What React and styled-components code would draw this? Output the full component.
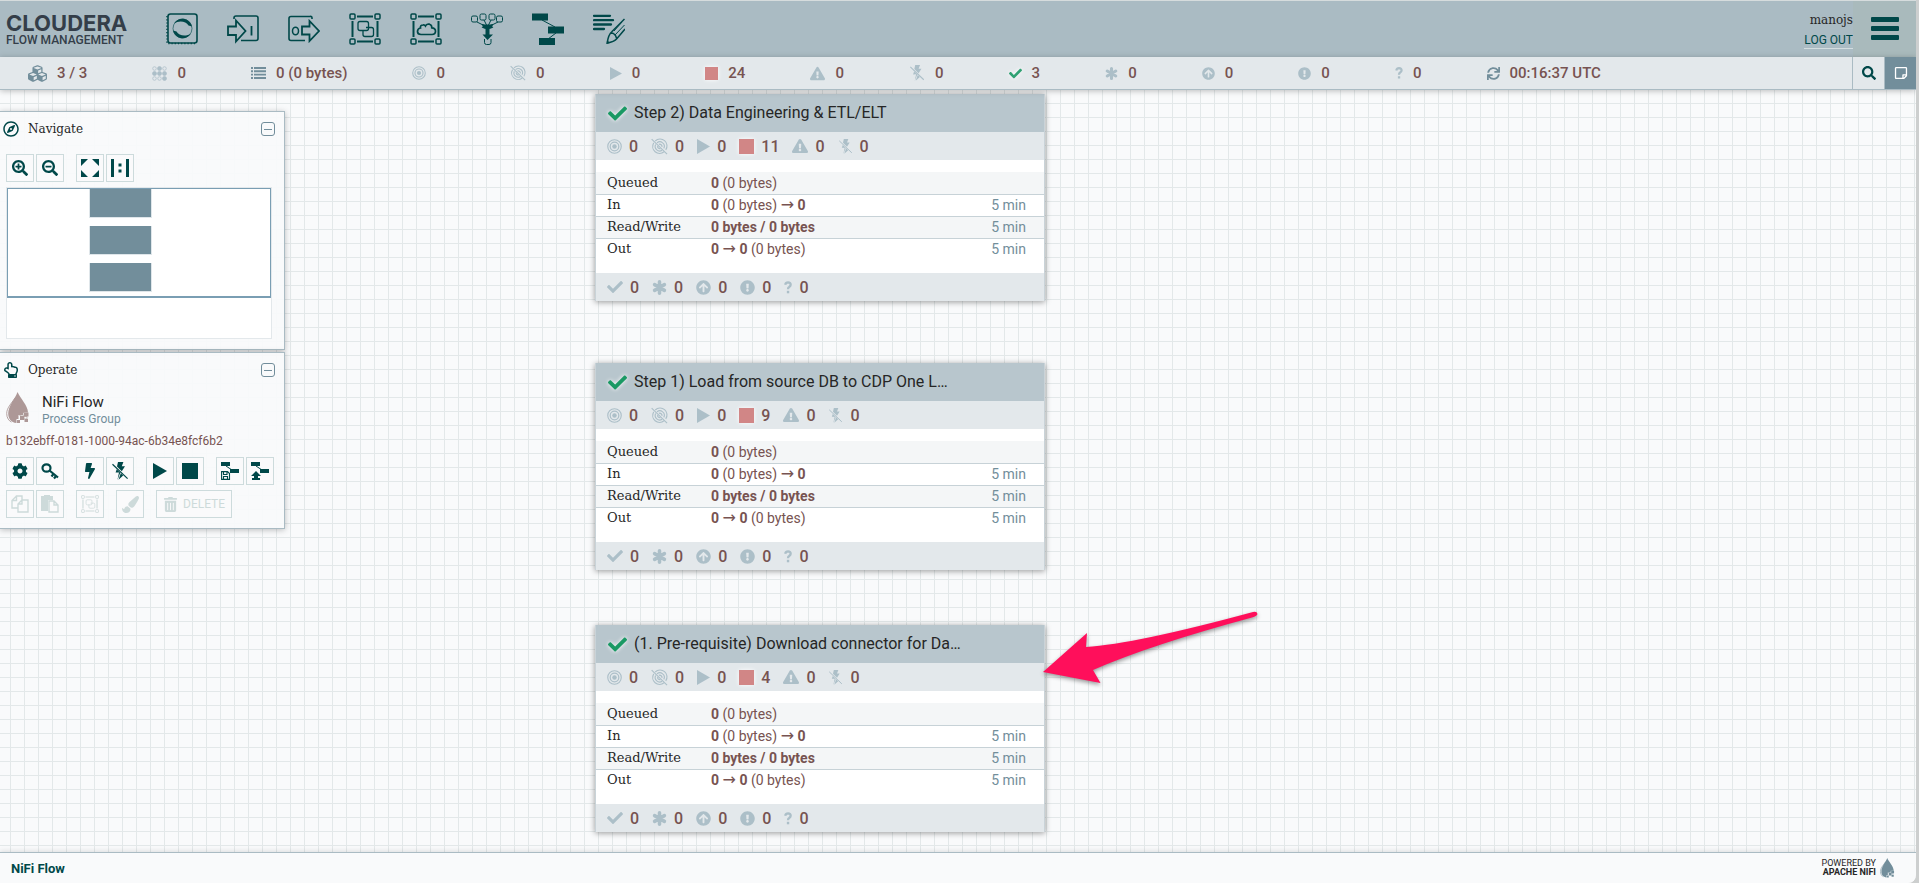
import React from "react";
import styled, { createGlobalStyle, css } from "styled-components";
import {
  FaCubes, FaCheck, FaArrowCircleUp, FaExclamationCircle, FaSync,
  FaSearch, FaRegStickyNote, FaRegCompass, FaRegHandPointUp, FaSearchPlus, FaSearchMinus,
  FaCog, FaBolt, FaPaintBrush, FaTrashAlt, FaExclamationTriangle,
} from "react-icons/fa";

const c = {
  dark: "#004849",
  header: "#aabbc3",
  bar: "#e3e8eb",
  steel: "#728e9b",
  pale: "#acbfc8",
  brown: "#775351",
  ink: "#262626",
  disabled: "#cddada",
};
const sans = `Roboto, "Liberation Sans", sans-serif`;
const slab = `"DejaVu Serif", "Liberation Serif", serif`;

const GlobalStyle = createGlobalStyle`
  *, *::before, *::after { box-sizing: border-box; }
  body { margin: 0; font-family: ${sans}; color: ${c.ink}; background: #cdcfcf; }
  button { font: inherit; margin: 0; padding: 0; cursor: pointer; }
  svg { display: block; flex: none; }
`;

const Page = styled.div`
  display: flex;
  flex-direction: column;
  height: 100vh;
  min-height: 640px;
  margin-right: 3px;
  background: #f9fafb;
  border-top: 1px solid #d6dcdd;
  border-bottom-right-radius: 8px;
  overflow: hidden;
`;

/* ---------- header ---------- */
const Header = styled.header`
  display: flex;
  flex: none;
  height: 56px;
  background: ${c.header};
`;
const Brand = styled.div`
  display: flex;
  flex-direction: column;
  width: 166px;
  padding: 11px 0 0 6px;
  color: #343e49;
  white-space: nowrap;
`;
const BrandName = styled.span`
  font-family: Inter, ${sans};
  font-size: 22px;
  line-height: 22px;
  font-weight: 700;
`;
const BrandProduct = styled.span`
  font-size: 12px;
  line-height: 12px;
  font-weight: 500;
`;
const Tools = styled.nav`
  display: flex;
  align-items: center;
  gap: 29px;
  padding-bottom: 1px;
`;
const ToolButton = styled.button`
  width: 32px;
  height: 32px;
  border: 0;
  background: none;
  color: ${c.dark};
`;
const Account = styled.div`
  display: flex;
  flex-direction: column;
  align-items: flex-end;
  margin-left: auto;
  padding-top: 10px;
`;
const UserName = styled.span`
  font-family: ${slab};
  font-size: 12px;
  line-height: 18px;
`;
const LogOut = styled.a`
  color: ${c.dark};
  font-size: 12px;
  line-height: 16px;
  margin-top: 3px;
  text-decoration: none;
  border-bottom: 1px solid #d3dde0;
`;
const MenuButton = styled.button`
  display: flex;
  flex-direction: column;
  align-items: center;
  gap: 4px;
  width: 63px;
  padding-top: 16px;
  border: 0;
  background: #a9babc;
`;
const MenuBar = styled.span`
  width: 28px;
  height: 5px;
  border-radius: 1px;
  background: ${c.dark};
`;

/* ---------- flow status ---------- */
const StatusBar = styled.div`
  display: flex;
  flex: none;
  height: 33px;
  background: ${c.bar};
  border-bottom: 1px solid ${c.header};
  box-shadow: 0 1px 6px rgba(0, 0, 0, 0.25);
  position: relative;
  z-index: 2;
`;
const StatusItems = styled.div`
  display: flex;
  flex: 0 1 1573px;
  align-items: center;
  justify-content: space-between;
  margin-left: 28px;
`;
const Stat = styled.span`
  display: flex;
  align-items: center;
  gap: ${(p) => (p.$compact ? 7 : 10)}px;
  color: ${c.brown};
  font-size: ${(p) => (p.$compact ? 16 : 15)}px;
  font-weight: 500;
  white-space: nowrap;
`;
const Glyph = styled.span`
  display: flex;
  color: ${(p) => p.$color || c.pale};
  ${(p) => p.$glow && css`filter: drop-shadow(0 0 2px #fff);`}
`;
const StatusButtons = styled.div`
  display: flex;
  margin-left: auto;
`;
const StatusButton = styled.button`
  display: flex;
  align-items: center;
  justify-content: center;
  width: 32px;
  border: 0;
  border-left: 1px solid ${c.header};
  background: ${(p) => (p.$on ? c.steel : c.bar)};
  color: ${(p) => (p.$on ? "#fff" : c.dark)};
`;

/* ---------- canvas ---------- */
const Canvas = styled.main`
  position: relative;
  flex: 1;
  min-height: 0;
  background-color: #f9fafb;
  background-image: linear-gradient(to right, #e3e8e9 1px, transparent 1px),
    linear-gradient(to bottom, #e3e8e9 1px, transparent 1px);
  background-size: 14px 14px;
  background-position: 10px 13px;
  overflow: hidden;
`;
const Panels = styled.aside`
  display: flex;
  flex-direction: column;
  gap: 2px;
  width: 285px;
  padding-top: 21px;
`;
const Panel = styled.section`
  padding: 0 9px 10px 6px;
  background: rgba(249, 250, 251, 0.92);
  border: 1px solid ${c.header};
  border-left: 0;
  box-shadow: 0 1px 6px rgba(0, 0, 0, 0.25);
`;
const PanelHead = styled.div`
  display: flex;
  align-items: center;
  gap: 9px;
  height: 32px;
  margin: 1px 0 0 -3px;
  color: ${c.dark};
`;
const PanelTitle = styled.h2`
  flex: 1;
  margin: 0;
  color: ${c.ink};
  font: 400 12px/18px ${slab};
`;
const Collapse = styled.button`
  display: flex;
  align-items: center;
  justify-content: center;
  width: 14px;
  height: 14px;
  border: 1px solid ${c.steel};
  border-radius: 3px;
  background: none;
  &::after { content: ""; width: 8px; height: 1px; background: ${c.steel}; }
`;
const ButtonRow = styled.div`
  display: flex;
  gap: 12px;
  margin-top: ${(p) => p.$top}px;
`;
const ButtonGroup = styled.div`
  display: flex;
  gap: 2px;
`;
const PanelButton = styled.button`
  display: flex;
  align-items: center;
  justify-content: center;
  gap: 5px;
  min-width: 28px;
  height: 28px;
  padding: ${(p) => (p.$wide ? "0 6px" : 0)};
  border: 1px solid #cddbdc;
  background: rgba(249, 250, 251, 0.9);
  color: ${(p) => (p.disabled ? c.disabled : c.dark)};
  font-size: 12px;
`;
const Birdseye = styled.div`
  height: 152px;
  margin: 5px 3px 0 0;
  border: 1px solid #e3e8eb;
  background: #fff;
`;
const Viewport = styled.div`
  display: flex;
  flex-direction: column;
  gap: 8px;
  height: 110px;
  padding-left: 81px;
  border: 1px solid #7a9eb3;
  border-bottom-width: 2px;
`;
const MiniNode = styled.span`
  width: 63px;
  height: 29px;
  flex: none;
  border: 1px solid #dfe6ea;
  border-top: 0;
  background: ${c.steel};
`;
const Component = styled.div`
  display: flex;
  gap: 12px;
  margin-top: 6px;
`;
const ComponentName = styled.div`
  font-size: 15px;
  line-height: 20px;
`;
const ComponentType = styled.div`
  color: ${c.steel};
  font-size: 12px;
  line-height: 14px;
`;
const ComponentId = styled.div`
  margin-top: 7px;
  color: ${c.brown};
  font-size: 12px;
  line-height: 16px;
`;

/* ---------- process group ---------- */
const Group = styled.article`
  position: absolute;
  left: 595px;
  top: ${(p) => p.$y}px;
  width: 450px;
  background: #fff;
  border: 1px solid #c9d3d8;
  border-width: 0 1px;
  box-shadow: 0 1px 6px rgba(0, 0, 0, 0.4);
`;
const GroupHead = styled.div`
  display: flex;
  align-items: center;
  gap: 7px;
  height: 38px;
  padding: 0 12px;
  background: #b8c6cd;
`;
const GroupTitle = styled.h3`
  margin: 0;
  font-size: 16px;
  line-height: 20px;
  font-weight: 400;
  white-space: nowrap;
`;
const GroupStats = styled.div`
  display: flex;
  align-items: center;
  gap: 13px;
  height: 28px;
  padding: 0 11px;
  background: ${c.bar};
`;
const FlowTable = styled.table`
  width: 100%;
  margin: 12px 0 13px;
  border-collapse: collapse;
  table-layout: fixed;
  font-size: 14px;
`;
const FlowRow = styled.tr`
  height: 22px;
  background: ${(p) => (p.$shade ? "#f4f6f7" : "#fff")};
  border-bottom: ${(p) => (p.$last ? 0 : "1px solid #c7d2d7")};
`;
const FlowLabel = styled.th`
  width: 115px;
  padding: 0 0 0 11px;
  font: 400 13px/16px ${slab};
  text-align: left;
`;
const FlowValue = styled.td`
  padding: 0;
  color: ${c.brown};
  line-height: 16px;
  b { font-weight: 700; }
`;
const FlowTime = styled.td`
  width: 100px;
  padding: 0 18px 0 0;
  color: ${c.steel};
  line-height: 16px;
  text-align: right;
`;
const Arrow = styled.span`
  font-family: "DejaVu Sans", sans-serif;
  font-size: 16px;
  line-height: 14px;
`;
const Pointer = styled.svg`
  position: absolute;
  left: 1038px;
  top: 514px;
  filter: drop-shadow(0 2px 2px rgba(0, 0, 0, 0.4));
`;

/* ---------- footer ---------- */
const Footer = styled.footer`
  display: flex;
  flex: none;
  align-items: center;
  justify-content: space-between;
  height: 31px;
  padding: 0 21px 0 11px;
  background: #f9fafb;
  border-top: 1px solid ${c.header};
  box-shadow: 0 -1px 5px rgba(0, 0, 0, 0.12);
  position: relative;
`;
const Crumb = styled.a`
  color: ${c.dark};
  font-size: 13px;
  font-weight: 700;
  text-decoration: none;
`;
const Powered = styled.div`
  display: flex;
  align-items: center;
  gap: 4px;
  font-size: 9px;
  line-height: 9px;
  text-align: right;
`;
const PoweredLine = styled.div`
  font-weight: ${(p) => (p.$bold ? 700 : 400)};
`;

/* ---------- drawings ---------- */
const Svg = ({ w = 16, h = w, box = `0 0 ${w} ${h}`, children }) => (
  <svg width={w} height={h} viewBox={box} fill="none" stroke="currentColor" aria-hidden="true">{children}</svg>
);
const Target = ({ w = 14 }) => (
  <Svg w={w} box="0 0 16 16"><circle cx="8" cy="8" r="7.2" strokeWidth="1.2" /><circle cx="8" cy="8" r="4.6" strokeWidth="1.3" /><circle cx="8" cy="8" r="2.4" fill="currentColor" stroke="none" /></Svg>
);
const TargetOff = ({ w = 18 }) => (
  <Svg w={w} box="0 0 18 18">
    <path d="M4.5 3.2A7.3 7.3 0 0 1 15.6 12.6M13.8 14.6A7.3 7.3 0 0 1 2.9 5.2" strokeWidth="1.2" />
    <path d="M6.3 5.2A4.7 4.7 0 0 1 13.5 11M11.8 12.9A4.7 4.7 0 0 1 4.9 7" strokeWidth="1.2" />
    <path d="M8.3 6.8A2.4 2.4 0 0 1 11.6 9.5M10 11.2A2.4 2.4 0 0 1 7 8.6" strokeWidth="1.3" />
    <path d="M.7 1.2 17 17" strokeWidth="1.2" />
  </Svg>
);
const Play = ({ w = 12, h = 13 }) => <svg width={w} height={h} viewBox="0 0 12 13" preserveAspectRatio="none" aria-hidden="true"><path d="M0 0 12 6.5 0 13Z" fill="currentColor" /></svg>;
const Stop = ({ w = 13 }) => <Svg w={w} box="0 0 10 10"><path d="M0 0H10V10H0Z" fill="currentColor" stroke="none" /></Svg>;
const Asterisk = ({ w = 14 }) => (
  <Svg w={w} box="0 0 14 14"><path d="M7 1.700V12.300M2.400 4.300 11.600 9.700M11.600 4.300 2.400 9.700" strokeWidth="3.300" strokeLinecap="round" /></Svg>
);
const Question = ({ w = 8, h = 12 }) => (
  <Svg w={w} h={h} box="0 0 9 14"><path d="M1.300 4Q2 1.300 4.500 1.300 7.500 1.500 7.500 4 7.500 5.300 5.800 6.500 4.500 7.300 4.500 9" strokeWidth="2.600" /><path d="M3.200 10.700H5.900V13.500H3.200Z" fill="currentColor" stroke="none" /></Svg>
);
const BoltOff = ({ w = 16 }) => (
  <Svg w={w} box="0 0 16 18">
    <path d="M6 0H11.4L9.8 4.3H13L9.8 9.2 5 4.4Z M4.7 7.2 8.3 10.8 5.4 18 7 10.4 3.6 10.6Z M8.8 11.2 11.2 13.6 6.5 17.8Z" fill="currentColor" stroke="none" />
    <path d="M.5 2.2 15.6 16.6" strokeWidth="1.2" />
  </Svg>
);
const Threads = () => (
  <Svg w={15}>
    {[2.5, 7.5, 12.5].map((y, r) => [2.5, 7.5, 12.5].map((x, k) => {
      const solid = r === 1 || (r === 0 && k === 1) || (r === 2 && k === 2);
      return <circle key={`${x}-${y}`} cx={x} cy={y} r={solid ? 2 : 1.8} strokeWidth=".7" fill={solid ? "currentColor" : "none"} />;
    }))}
  </Svg>
);
const Lines = () => (
  <Svg w={15} h={12}><path d="M0 1H2M3 1H15M0 4.3H2M3 4.3H15M0 7.6H2M3 7.6H15M0 11H2M3 11H15" strokeWidth="1.9" /></Svg>
);
const Drop = ({ w = 24, h = 32 }) => (
  <Svg w={w} h={h} box="0 0 24 32">
    <path d="M11.5 0C14 6 22 13.500 22 20.500H17V23H12.500V27H10.500V31C5 30.500 2.200 26.500 2.200 21.500 2.200 14 9 7 11.500 0Z" fill="currentColor" stroke="none" />
    <path d="M9 6C5 12 .7 16 .7 21.500 .7 26 3 29 5.500 30" strokeWidth=".9" />
    <path d="M18 20.500H22.500V24.500H18Z M14 24H18V28H14Z M18.500 27H22V30H18.500Z M11 28H14V31H11Z" fill="currentColor" stroke="none" />
    <path d="M14 20.500H18V24H14Z M18 24.500H21V27H18Z" strokeWidth=".7" />
  </Svg>
);
const Processor = () => (
  <Svg w={32}>
    <rect x="2" y="1" width="29" height="29" rx="2.500" strokeWidth="1.600" />
    <path d="M1 3V30.500H29" strokeWidth="1.500" strokeDasharray="1.200 2" />
    <circle cx="16.500" cy="15.500" r="9.500" strokeWidth=".6" />
    <path d="M8 10.500C12 3.500 23.500 4 26 13.500L22.500 12.500C20 8 13 7 8 10.500Z M25 20.500C21 27.500 9.500 27 7 17.500L10.500 18.500C13 23 20 24 25 20.500Z" fill="currentColor" stroke="none" />
  </Svg>
);
const InputPort = () => (
  <Svg w={32}>
    <path d="M7 6V5Q7 3 9 3H29Q31 3 31 5V25.500Q31 27.500 29 27.500H14" strokeWidth="1.600" />
    <path d="M1 13.500H9V7.500L18.500 18 9 28.500V22H1Z" strokeWidth="1.800" />
    <path d="M24.500 13V22.500" strokeWidth="1.800" />
  </Svg>
);
const OutputPort = () => (
  <Svg w={32}>
    <path d="M24 6V5Q24 3 22 3.500H3Q1 3.500 1 5.500V25.500Q1 27.500 3 27.500H17" strokeWidth="1.600" />
    <path d="M14 13.500H21.500V8L31 18 21.500 28V21.500H14Z" strokeWidth="1.800" />
    <ellipse cx="7.500" cy="18" rx="3" ry="3.800" strokeWidth="1.500" />
  </Svg>
);
const Frame = ({ w = 32, children }) => (
  <Svg w={w} box="0 0 32 32">
    {[[1, 1], [26, 1], [1, 26], [26, 26]].map(([x, y]) => <rect key={`${x}-${y}`} x={x} y={y} width="5" height="5" rx="1" strokeWidth="1.500" />)}
    <path d="M8 3.500H24M8 28.500H24M3.500 8V24M28.500 8V24" strokeWidth="2" />
    {children}
  </Svg>
);
const GroupShapes = () => (
  <>
    <rect x="9" y="8.500" width="10.500" height="9" rx="2" strokeWidth="1.300" />
    <path d="M17 14.500H22.500Q24.500 14.500 24.500 16.500V21.500Q24.500 23.500 22.500 23.500H16Q14 23.500 14 21.500V17.500" strokeWidth="1.300" />
  </>
);
const Cloud = () => (
  <path d="M11 21.500Q7.500 21.500 7.500 18.500 7.500 15.500 10.500 15 10 12 13 12 14.500 11.500 15.500 13 16.500 10.500 19.500 11.200 22 12 21.800 14.800 25.500 15 25.500 18.300 25.500 21.500 22 21.500Z" strokeWidth="1.700" />
);
const Funnel = () => (
  <Svg w={32}>
    <g strokeWidth="1">
      <rect x="0.500" y="3" width="6" height="6" rx="1.500" /><rect x="9" y="1" width="6" height="6" rx="1.500" /><rect x="18" y="1" width="6" height="6" rx="1.500" /><rect x="25.500" y="3" width="6" height="6" rx="1.500" />
      <path d="M6 9 14 13M13 7 16 13M20 7 17 13M27 9 19 13" />
      <path d="M11 11.500Q16.500 14 22 11.500M11 14Q16.500 17 22 14" strokeWidth="1.300" />
      <path d="M13.500 26V29.500Q13.500 31.500 15.500 31.500H18Q20 31.500 20 29.500V26" />
    </g>
    <path d="M11 11.500H22L20.500 15H12.500Z M14.500 15.500H18.500V21.500H22L16.500 27 11.500 21.500H14.500Z" fill="currentColor" stroke="none" />
  </Svg>
);
const Template = () => (
  <Svg w={32}>
    <path d="M0 .500H16V7.500H0Z M16 13.500H32V20.500H16Z M7 25H23V32H7Z" fill="currentColor" stroke="none" />
    <path d="M10 7 23 14M24 20 16 26" />
  </Svg>
);
const Label = () => (
  <Svg w={32}>
    <path d="M1 2.800H17M1 7.200H20M1 11.500H18M1 16H11" strokeWidth="2.300" strokeLinecap="round" />
    <path d="M31.500 6 19 18.500Q15 22 14.300 30 21 29 24 25.500L32 16M18 20Q22 20 23.500 25" strokeWidth="1.500" />
    <path d="M22 22 31.500 12M29 9 21 18" strokeWidth="1" /><path d="M14 27 17 30 13.500 31Z" fill="currentColor" stroke="none" />
  </Svg>
);
const Fit = () => (
  <Svg w={18}><path d="M0 0H7L0 7Z M18 0V7L11 0Z M0 18V11L7 18Z M18 18H11L18 11Z" fill="currentColor" stroke="none" /></Svg>
);
const OneToOne = () => (
  <Svg w={18}><path d="M1.500 0V18M16.500 0V18M9 4.500V7.500M9 10.500V13.500" strokeWidth="3" /></Svg>
);
const Key = () => (
  <Svg w={18}><ellipse cx="5.500" cy="6" rx="4" ry="3.700" strokeWidth="2.200" /><path d="M8.500 8.500 17 15.500M12.500 12 10.500 14.500M15 14 13 16.500" strokeWidth="2.200" /></Svg>
);
const TemplateAction = ({ upload }) => (
  <Svg w={18}>
    <path d="M0 0H9V4H0Z M9 7H18V11H9Z" fill="currentColor" stroke="none" /><path d="M5 4 11 8" strokeWidth="1" />
    {upload
      ? <path d="M5 9 10 14H7V16H3V14H0Z M1 16H9V18H1Z" fill="currentColor" stroke="none" />
      : <path d="M.600 9.600H6.500L8.500 11.500V17.400H.600ZM2.500 9.600V12.500H6V9.600M2.500 17V14.500H6.500V17" strokeWidth="1.100" />}
  </Svg>
);
const Copy = () => (
  <Svg w={18}><path d="M5.500 6V1H11V5M5.500 1 1 5.500V13H7M5.500 1V5.500H1M11 5H17V17H7V9L11 5V9H7" strokeWidth="1.400" /></Svg>
);
const Paste = () => (
  <Svg w={18}><path d="M0 1H3V0H9V1H12V5H7V16H0Z" fill="currentColor" stroke="none" /><path d="M8 6H13L17 10V17H8ZM13 6V10H17" strokeWidth="1.400" /></Svg>
);

const statuses = [
  [<FaCubes size={19} />, "3 / 3", c.steel, "Connected nodes"],
  [<Threads />, "0", c.pale, "Active threads"],
  [<Lines />, "0 (0 bytes)", c.steel, "Queued"],
  [<Target />, "0", c.pale, "Transmitting"],
  [<TargetOff w={16} />, "0", c.pale, "Not transmitting"],
  [<Play />, "0", c.pale, "Running"],
  [<Stop />, "24", "#d18686", "Stopped"],
  [<FaExclamationTriangle size={15} />, "0", c.pale, "Invalid"],
  [<BoltOff />, "0", c.pale, "Disabled"],
  [<FaCheck size={13} />, "3", "#2fa173", "Up to date"],
  [<Asterisk w={13} />, "0", c.pale, "Locally modified"],
  [<FaArrowCircleUp size={13} />, "0", c.pale, "Stale"],
  [<FaExclamationCircle size={13} />, "0", c.pale, "Locally modified and stale"],
  [<Question />, "0", c.pale, "Sync failure"],
  [<FaSync size={13} />, "00:16:37 UTC", c.steel, "Last refresh"],
];
const tools = [
  ["Processor", <Processor />], ["Input Port", <InputPort />], ["Output Port", <OutputPort />],
  ["Process Group", <Frame><GroupShapes /></Frame>], ["Remote Process Group", <Frame><Cloud /></Frame>],
  ["Funnel", <Funnel />], ["Template", <Template />], ["Label", <Label />],
];
const groups = [
  { title: "Step 2) Data Engineering & ETL/ELT", stopped: 11, y: 4 },
  { title: "Step 1) Load from source DB to CDP One L…", stopped: 9, y: 273 },
  { title: "(1. Pre-requisite) Download connector for Da…", stopped: 4, y: 535 },
];

const StatItem = ({ icon, value, color, compact, label }) => (
  <Stat $compact={compact} title={label}>
    <Glyph $color={color} $glow={color === "#d18686" || color === "#2fa173"}>{icon}</Glyph>
    {value}
  </Stat>
);

const ProcessGroup = ({ title, stopped, y }) => (
  <Group $y={y}>
    <GroupHead>
      <Glyph $color="#1a9964" $glow><FaCheck size={19} /></Glyph>
      <GroupTitle>{title}</GroupTitle>
    </GroupHead>
    <GroupStats>
      <StatItem compact icon={<Target w={15} />} value="0" />
      <StatItem compact icon={<TargetOff w={17} />} value="0" />
      <StatItem compact icon={<Play w={13} h={15} />} value="0" />
      <StatItem compact icon={<Stop w={15} />} value={stopped} color="#d18686" />
      <StatItem compact icon={<FaExclamationTriangle size={16} />} value="0" />
      <StatItem compact icon={<BoltOff w={15} />} value="0" />
    </GroupStats>
    <FlowTable>
      <tbody>
        <FlowRow $shade><FlowLabel scope="row">Queued</FlowLabel><FlowValue><b>0</b> (0 bytes)</FlowValue><FlowTime /></FlowRow>
        <FlowRow><FlowLabel scope="row">In</FlowLabel><FlowValue><b>0</b> (0 bytes) <Arrow>→</Arrow> <b>0</b></FlowValue><FlowTime>5 min</FlowTime></FlowRow>
        <FlowRow $shade><FlowLabel scope="row">Read/Write</FlowLabel><FlowValue><b>0 bytes / 0 bytes</b></FlowValue><FlowTime>5 min</FlowTime></FlowRow>
        <FlowRow $last><FlowLabel scope="row">Out</FlowLabel><FlowValue><b>0</b> <Arrow>→</Arrow> <b>0</b> (0 bytes)</FlowValue><FlowTime>5 min</FlowTime></FlowRow>
      </tbody>
    </FlowTable>
    <GroupStats>
      <StatItem compact icon={<FaCheck size={16} />} value="0" />
      <StatItem compact icon={<Asterisk w={15} />} value="0" />
      <StatItem compact icon={<FaArrowCircleUp size={15} />} value="0" />
      <StatItem compact icon={<FaExclamationCircle size={15} />} value="0" />
      <StatItem compact icon={<Question w={8} h={13} />} value="0" />
    </GroupStats>
  </Group>
);

export default function App() {
  return (
    <>
      <GlobalStyle />
      <Page>
        <Header>
          <Brand>
            <BrandName>CLOUDERA</BrandName>
            <BrandProduct>FLOW MANAGEMENT</BrandProduct>
          </Brand>
          <Tools aria-label="Components">
            {tools.map(([name, icon]) => <ToolButton key={name} aria-label={name}>{icon}</ToolButton>)}
          </Tools>
          <Account>
            <UserName>manojs</UserName>
            <LogOut href="#logout">LOG OUT</LogOut>
          </Account>
          <MenuButton aria-label="Global menu"><MenuBar /><MenuBar /><MenuBar /></MenuButton>
        </Header>

        <StatusBar>
          <StatusItems>
            {statuses.map(([icon, value, color, label]) => (
              <StatItem key={label} icon={icon} value={value} color={color} label={label} />
            ))}
          </StatusItems>
          <StatusButtons>
            <StatusButton aria-label="Search"><FaSearch size={14} /></StatusButton>
            <StatusButton $on aria-label="Bulletins"><FaRegStickyNote size={14} /></StatusButton>
          </StatusButtons>
        </StatusBar>

        <Canvas>
          <Panels>
            <Panel>
              <PanelHead>
                <FaRegCompass size={16} />
                <PanelTitle>Navigate</PanelTitle>
                <Collapse aria-label="Collapse Navigate" />
              </PanelHead>
              <ButtonRow $top={9}>
                <ButtonGroup>
                  <PanelButton aria-label="Zoom in"><FaSearchPlus size={16} /></PanelButton>
                  <PanelButton aria-label="Zoom out"><FaSearchMinus size={16} /></PanelButton>
                </ButtonGroup>
                <ButtonGroup>
                  <PanelButton aria-label="Fit"><Fit /></PanelButton>
                  <PanelButton aria-label="Actual size"><OneToOne /></PanelButton>
                </ButtonGroup>
              </ButtonRow>
              <Birdseye>
                <Viewport><MiniNode /><MiniNode /><MiniNode /></Viewport>
              </Birdseye>
            </Panel>

            <Panel>
              <PanelHead>
                <FaRegHandPointUp size={16} />
                <PanelTitle>Operate</PanelTitle>
                <Collapse aria-label="Collapse Operate" />
              </PanelHead>
              <Component>
                <Glyph $color="#ad9897"><Drop /></Glyph>
                <div>
                  <ComponentName>NiFi Flow</ComponentName>
                  <ComponentType>Process Group</ComponentType>
                </div>
              </Component>
              <ComponentId>b132ebff-0181-1000-94ac-6b34e8fcf6b2</ComponentId>
              <ButtonRow $top={8}>
                <ButtonGroup>
                  <PanelButton aria-label="Configuration"><FaCog size={16} /></PanelButton>
                  <PanelButton aria-label="Access policies"><Key /></PanelButton>
                </ButtonGroup>
                <ButtonGroup>
                  <PanelButton aria-label="Enable"><FaBolt size={16} /></PanelButton>
                  <PanelButton aria-label="Disable"><BoltOff w={18} /></PanelButton>
                </ButtonGroup>
                <ButtonGroup>
                  <PanelButton aria-label="Start"><Play w={14} h={16} /></PanelButton>
                  <PanelButton aria-label="Stop"><Stop w={16} /></PanelButton>
                </ButtonGroup>
                <ButtonGroup>
                  <PanelButton aria-label="Create template"><TemplateAction /></PanelButton>
                  <PanelButton aria-label="Upload template"><TemplateAction upload /></PanelButton>
                </ButtonGroup>
              </ButtonRow>
              <ButtonRow $top={5}>
                <ButtonGroup>
                  <PanelButton disabled aria-label="Copy"><Copy /></PanelButton>
                  <PanelButton disabled aria-label="Paste"><Paste /></PanelButton>
                </ButtonGroup>
                <PanelButton disabled aria-label="Group"><Frame w={18}><GroupShapes /></Frame></PanelButton>
                <PanelButton disabled aria-label="Change color"><FaPaintBrush size={17} /></PanelButton>
                <PanelButton disabled $wide><FaTrashAlt size={15} />DELETE</PanelButton>
              </ButtonRow>
            </Panel>
          </Panels>

          {groups.map((g) => <ProcessGroup key={g.title} {...g} />)}

          <Pointer width="226" height="92" viewBox="1038 604 226 92" aria-hidden="true">
            <path d="M1043 672 1087 633 1086 647Q1135 644 1253 612 1257 611 1257.500 614 1257 616 1252 617.500 1150 645 1093 670L1100.500 683Z" fill="#ff0f5b" />
          </Pointer>
        </Canvas>

        <Footer>
          <Crumb href="#root">NiFi Flow</Crumb>
          <Powered>
            <div>
              <PoweredLine>POWERED BY</PoweredLine>
              <PoweredLine $bold>APACHE NIFI</PoweredLine>
            </div>
            <Glyph $color={c.steel}><Drop w={15} h={20} /></Glyph>
          </Powered>
        </Footer>
      </Page>
    </>
  );
}
